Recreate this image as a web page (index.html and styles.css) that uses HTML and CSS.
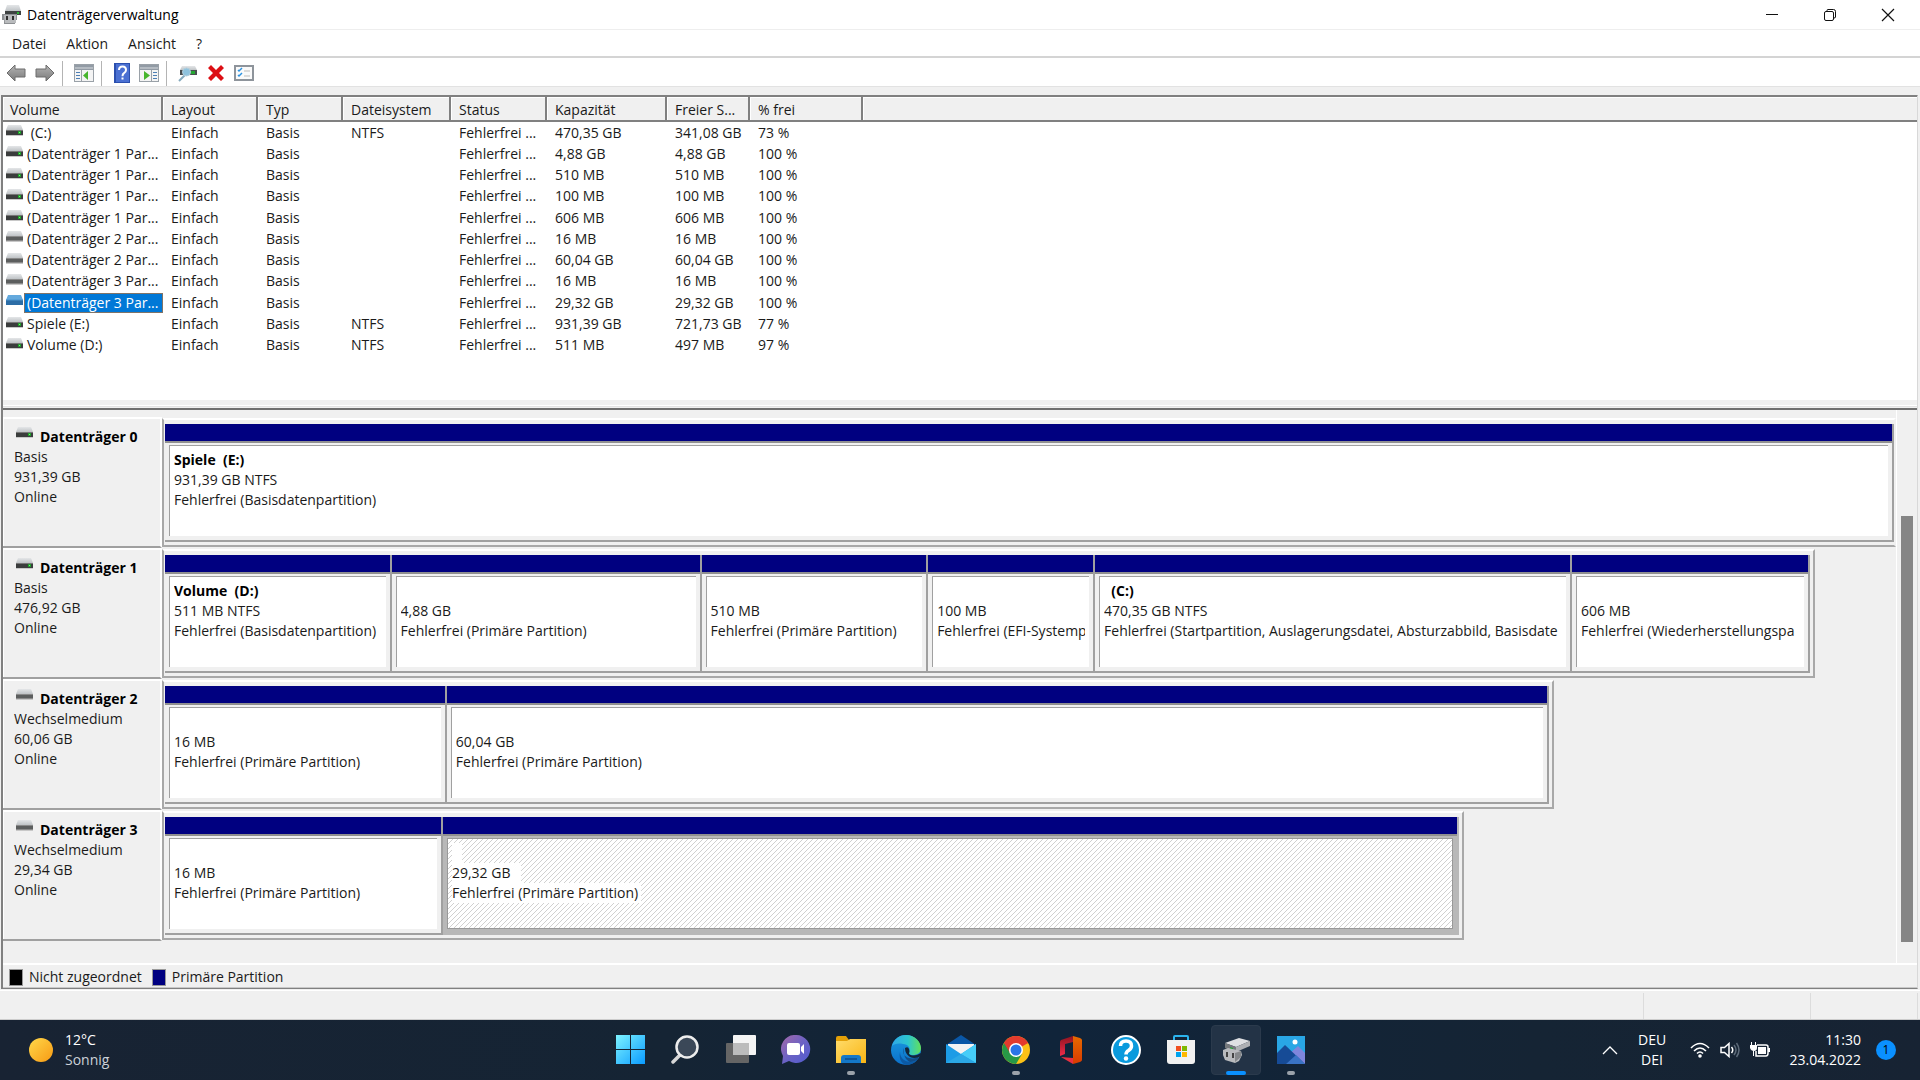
FILE: index.html
```html
<!DOCTYPE html>
<html lang="de">
<head>
<meta charset="utf-8">
<title>Datenträgerverwaltung</title>
<link rel="stylesheet" href="styles.css">
</head>
<body>
<svg class="defs" aria-hidden="true">
  <defs>
    <linearGradient id="metal" x1="0" y1="0" x2="0" y2="1"><stop offset="0" stop-color="#e4e6e8"/><stop offset="1" stop-color="#bfc3c6"/></linearGradient>
    <linearGradient id="arrow" x1="0" y1="0" x2="0" y2="1"><stop offset="0" stop-color="#b4b4b4"/><stop offset="1" stop-color="#7a7a7a"/></linearGradient>
    <linearGradient id="winblue" x1="0" y1="0" x2="1" y2="1"><stop offset="0" stop-color="#7df3ff"/><stop offset="1" stop-color="#0a9bff"/></linearGradient>
    <linearGradient id="chatg" x1="0" y1="0" x2="1" y2="1"><stop offset="0" stop-color="#a568a8"/><stop offset=".5" stop-color="#6b62c4"/><stop offset="1" stop-color="#4f5bd0"/></linearGradient>
    <linearGradient id="folder" x1="0" y1="0" x2="1" y2="1"><stop offset="0" stop-color="#ffdc6b"/><stop offset="1" stop-color="#f9b514"/></linearGradient>
    <linearGradient id="edgeg" x1="0" y1="0" x2="1" y2="0"><stop offset="0" stop-color="#2fa8e8"/><stop offset=".55" stop-color="#2cc6cf"/><stop offset="1" stop-color="#62e05a"/></linearGradient>
    <linearGradient id="edgeb" x1="0" y1="0" x2="0" y2="1"><stop offset="0" stop-color="#1b9be0"/><stop offset="1" stop-color="#0b6fc9"/></linearGradient>
    <linearGradient id="office" x1="0" y1="0" x2="0" y2="1"><stop offset="0" stop-color="#8f1420"/><stop offset="1" stop-color="#ef2b4a"/></linearGradient>
    <linearGradient id="officer" x1="0" y1="0" x2="0" y2="1"><stop offset="0" stop-color="#e66a00"/><stop offset="1" stop-color="#d83b01"/></linearGradient>
    <linearGradient id="sun" x1="0" y1="0" x2="1" y2="1"><stop offset="0" stop-color="#ffd84a"/><stop offset="1" stop-color="#f79a14"/></linearGradient>
    <symbol id="fixed" viewBox="0 0 18 11"><path d="M2 0h13l2 5H0z" fill="url(#metal)"/><rect y="5" width="17" height="5" fill="#3b3d3d"/><rect y="5" width="17" height="1" fill="#777"/><rect x="12" y="6" width="3" height="3" fill="#1f9e2a"/><rect x="13" y="7" width="1" height="1" fill="#6dff6d"/><rect y="10" width="17" height="1" fill="#c8c8c8"/></symbol>
    <symbol id="removable" viewBox="0 0 18 11"><path d="M2 0h13l2 5H0z" fill="url(#metal)"/><rect y="5" width="17" height="5" fill="#5c5e5e"/><rect y="5" width="17" height="1" fill="#8a8a8a"/><rect y="9" width="17" height="1" fill="#8a8a8a"/><rect y="10" width="17" height="1" fill="#c8c8c8"/></symbol>
    <symbol id="marked" viewBox="0 0 18 11"><path d="M2 0h13l2 5H0z" fill="#64a9dd"/><rect y="5" width="17" height="5" fill="#2c6da6"/><path d="M0 5h17" stroke="#4a93cc"/></symbol>
  </defs>
</svg>

<div class="window">
  <header class="titlebar">
    <svg class="app-icon" viewBox="0 0 20 19" width="20" height="19"><path d="M5 0h12l2 6H3z" fill="url(#metal)"/><path d="M3 6h16v4H3z" fill="#3e4242"/><rect x="15" y="7" width="2" height="2" fill="#27b531"/><path d="M0 9h15v6h-2v4H2v-4H0z" fill="#8c8f92"/><path d="M2 10h12v8H3z" fill="#b9bbbd"/><rect x="4" y="11" width="2" height="4" fill="#303030"/><rect x="10" y="11" width="2" height="4" fill="#303030"/></svg>
    <h1 class="title">Datenträgerverwaltung</h1>
    <div class="caption">
      <button class="cap" aria-label="Minimieren"><svg viewBox="0 0 14 14" width="14" height="14"><path d="M1 6.500h12" stroke="#111" fill="none"/></svg></button>
      <button class="cap" aria-label="Verkleinern"><svg viewBox="0 0 14 14" width="14" height="14" fill="none" stroke="#111"><rect x="1.500" y="3.500" width="9" height="9" rx="1.500"/><path d="M4 3V2.500Q4 1.500 5 1.500H10.500Q12.500 1.500 12.500 3.500V9Q12.500 10 11 10"/></svg></button>
      <button class="cap" aria-label="Schließen"><svg viewBox="0 0 14 14" width="14" height="14"><path d="M1 1l12 12M13 1L1 13" stroke="#111" stroke-width="1.200"/></svg></button>
    </div>
  </header>

  <nav class="menubar">
    <button>Datei</button><button>Aktion</button><button>Ansicht</button><button>?</button>
  </nav>

  <div class="toolbar">
    <button aria-label="Zurück"><svg viewBox="0 0 20 18" width="20" height="18"><path d="M1 9L9 1v4h10v8H9v4z" fill="url(#arrow)" stroke="#6c6c6c"/></svg></button>
    <button aria-label="Vorwärts"><svg viewBox="0 0 20 18" width="20" height="18"><path d="M19 9L11 1v4H1v8h10v4z" fill="url(#arrow)" stroke="#6c6c6c"/></svg></button>
    <span class="sep"></span>
    <button class="wide" aria-label="Konsolenstruktur"><svg viewBox="0 0 20 18" width="20" height="18"><rect x=".5" y=".5" width="19" height="17" fill="#f4f4f4" stroke="#9aa1a8"/><path d="M1 1h18v5H1z" fill="#929ba5"/><path d="M1 4h18" stroke="#d8dce0"/><path d="M7.500 6v11" stroke="#9aa1a8"/><path d="M2 8.500h4M2 11.500h4M2 14.500h4" stroke="#4d7fb5"/><path d="M14 7v9l-5-4.500z" fill="#47b52c"/></svg></button>
    <span class="sep"></span>
    <button aria-label="Hilfe"><svg viewBox="0 0 16 20" width="16" height="20"><rect width="16" height="20" fill="#2b4fae"/><rect x="2" y="1" width="13" height="18" fill="#4a70d2"/><path d="M5 7q0-3.500 3.500-3.500T12 7q0 2-2 3.200-1.500 1-1.500 3" fill="none" stroke="#fff" stroke-width="2"/><rect x="7.500" y="14.500" width="2" height="2" fill="#fff"/></svg></button>
    <button aria-label="Aktionsbereich"><svg viewBox="0 0 20 18" width="20" height="18"><rect x=".5" y=".5" width="19" height="17" fill="#f4f4f4" stroke="#9aa1a8"/><path d="M1 1h18v5H1z" fill="#929ba5"/><path d="M1 4h18" stroke="#d8dce0"/><path d="M12.500 6v11" stroke="#9aa1a8"/><path d="M14 8.500h4M14 11.500h4M14 14.500h4" stroke="#4d7fb5"/><path d="M5 7v9l6-4.500z" fill="#47b52c"/></svg></button>
    <span class="sep"></span>
    <button class="wide" aria-label="Datenträger neu einlesen"><svg viewBox="0 0 20 18" width="20" height="18"><path d="M4 2h13l2 4H2z" fill="url(#metal)"/><rect x="2" y="6" width="17" height="5" fill="#4a4e50"/><rect x="13" y="7" width="4" height="3" fill="#25a732"/><path d="M7 11L1 17" stroke="#86aabd" stroke-width="2"/><circle cx="8.500" cy="8" r="4" fill="#8fc3de" stroke="#b5cfdc"/></svg></button>
    <button aria-label="Löschen"><svg viewBox="0 0 18 18" width="18" height="18"><path d="M1 4l3-3 5 5 5-5 3 3-5 5 5 5-3 3-5-5-5 5-3-3 5-5z" fill="#dc0f14"/></svg></button>
    <button aria-label="Eigenschaften"><svg viewBox="0 0 20 16" width="20" height="16"><rect x="1" y="1" width="18" height="14" fill="#fafafa" stroke="#8e949b" stroke-width="2"/><path d="M4 5l1 1 3-3M4 10l1 1 3-3" fill="none" stroke="#2b92e0" stroke-width="1.500"/><path d="M10 6h6M10 11h6" stroke="#bbb"/></svg></button>
  </div>

  <main class="content">
    <section class="volumes">
      <table class="vol">
        <colgroup><col class="c1"><col class="c2"><col class="c3"><col class="c4"><col class="c5"><col class="c6"><col class="c7"><col class="c8"><col></colgroup>
        <thead><tr><th>Volume</th><th>Layout</th><th>Typ</th><th>Dateisystem</th><th>Status</th><th>Kapazität</th><th>Freier S...</th><th>% frei</th><th></th></tr></thead>
        <tbody>
          <tr><td><div class="name"><svg><use href="#fixed"/></svg><span>&nbsp;(C:)</span></div></td><td>Einfach</td><td>Basis</td><td>NTFS</td><td>Fehlerfrei ...</td><td>470,35 GB</td><td>341,08 GB</td><td>73 %</td><td></td></tr>
          <tr><td><div class="name"><svg><use href="#fixed"/></svg><span>(Datenträger 1 Par...</span></div></td><td>Einfach</td><td>Basis</td><td></td><td>Fehlerfrei ...</td><td>4,88 GB</td><td>4,88 GB</td><td>100 %</td><td></td></tr>
          <tr><td><div class="name"><svg><use href="#fixed"/></svg><span>(Datenträger 1 Par...</span></div></td><td>Einfach</td><td>Basis</td><td></td><td>Fehlerfrei ...</td><td>510 MB</td><td>510 MB</td><td>100 %</td><td></td></tr>
          <tr><td><div class="name"><svg><use href="#fixed"/></svg><span>(Datenträger 1 Par...</span></div></td><td>Einfach</td><td>Basis</td><td></td><td>Fehlerfrei ...</td><td>100 MB</td><td>100 MB</td><td>100 %</td><td></td></tr>
          <tr><td><div class="name"><svg><use href="#fixed"/></svg><span>(Datenträger 1 Par...</span></div></td><td>Einfach</td><td>Basis</td><td></td><td>Fehlerfrei ...</td><td>606 MB</td><td>606 MB</td><td>100 %</td><td></td></tr>
          <tr><td><div class="name"><svg><use href="#removable"/></svg><span>(Datenträger 2 Par...</span></div></td><td>Einfach</td><td>Basis</td><td></td><td>Fehlerfrei ...</td><td>16 MB</td><td>16 MB</td><td>100 %</td><td></td></tr>
          <tr><td><div class="name"><svg><use href="#removable"/></svg><span>(Datenträger 2 Par...</span></div></td><td>Einfach</td><td>Basis</td><td></td><td>Fehlerfrei ...</td><td>60,04 GB</td><td>60,04 GB</td><td>100 %</td><td></td></tr>
          <tr><td><div class="name"><svg><use href="#removable"/></svg><span>(Datenträger 3 Par...</span></div></td><td>Einfach</td><td>Basis</td><td></td><td>Fehlerfrei ...</td><td>16 MB</td><td>16 MB</td><td>100 %</td><td></td></tr>
          <tr class="selected"><td><div class="name"><svg><use href="#marked"/></svg><span>(Datenträger 3 Par...</span></div></td><td>Einfach</td><td>Basis</td><td></td><td>Fehlerfrei ...</td><td>29,32 GB</td><td>29,32 GB</td><td>100 %</td><td></td></tr>
          <tr><td><div class="name"><svg><use href="#fixed"/></svg><span>Spiele (E:)</span></div></td><td>Einfach</td><td>Basis</td><td>NTFS</td><td>Fehlerfrei ...</td><td>931,39 GB</td><td>721,73 GB</td><td>77 %</td><td></td></tr>
          <tr><td><div class="name"><svg><use href="#fixed"/></svg><span>Volume (D:)</span></div></td><td>Einfach</td><td>Basis</td><td>NTFS</td><td>Fehlerfrei ...</td><td>511 MB</td><td>497 MB</td><td>97 %</td><td></td></tr>
        </tbody>
      </table>
    </section>
    <div class="splitter"></div>

    <section class="graph">
      <div class="disks">
        <div class="row">
          <div class="label"><h2><svg><use href="#fixed"/></svg>Datenträger 0</h2><p>Basis</p><p>931,39 GB</p><p>Online</p></div>
          <div class="track"><div class="disk full">
            <div class="part"><div class="bar"></div><div class="body"><div class="box"><p><b>Spiele&nbsp; (E:)</b></p><p>931,39 GB NTFS</p><p>Fehlerfrei (Basisdatenpartition)</p></div></div></div>
          </div></div>
        </div>
        <div class="row">
          <div class="label"><h2><svg><use href="#fixed"/></svg>Datenträger 1</h2><p>Basis</p><p>476,92 GB</p><p>Online</p></div>
          <div class="track"><div class="disk" style="width:95.3%">
            <div class="part" style="flex-grow:226"><div class="bar"></div><div class="body"><div class="box"><p><b>Volume&nbsp; (D:)</b></p><p>511 MB NTFS</p><p>Fehlerfrei (Basisdatenpartition)</p></div></div></div>
            <div class="part" style="flex-grow:310"><div class="bar"></div><div class="body"><div class="box"><p></p><p>4,88 GB</p><p>Fehlerfrei (Primäre Partition)</p></div></div></div>
            <div class="part" style="flex-grow:226"><div class="bar"></div><div class="body"><div class="box"><p></p><p>510 MB</p><p>Fehlerfrei (Primäre Partition)</p></div></div></div>
            <div class="part" style="flex-grow:166"><div class="bar"></div><div class="body"><div class="box"><p></p><p>100 MB</p><p>Fehlerfrei (EFI-Systemp</p></div></div></div>
            <div class="part" style="flex-grow:478"><div class="bar"></div><div class="body"><div class="box"><p><b>&nbsp; (C:)</b></p><p>470,35 GB NTFS</p><p>Fehlerfrei (Startpartition, Auslagerungsdatei, Absturzabbild, Basisdate</p></div></div></div>
            <div class="part" style="flex-grow:237"><div class="bar"></div><div class="body"><div class="box"><p></p><p>606 MB</p><p>Fehlerfrei (Wiederherstellungspa</p></div></div></div>
          </div></div>
        </div>
        <div class="row">
          <div class="label"><h2><svg><use href="#removable"/></svg>Datenträger 2</h2><p>Wechselmedium</p><p>60,06 GB</p><p>Online</p></div>
          <div class="track"><div class="disk" style="width:80.3%">
            <div class="part" style="flex-grow:281"><div class="bar"></div><div class="body"><div class="box"><p></p><p>16 MB</p><p>Fehlerfrei (Primäre Partition)</p></div></div></div>
            <div class="part" style="flex-grow:1105"><div class="bar"></div><div class="body"><div class="box"><p></p><p>60,04 GB</p><p>Fehlerfrei (Primäre Partition)</p></div></div></div>
          </div></div>
        </div>
        <div class="row">
          <div class="label"><h2><svg><use href="#removable"/></svg>Datenträger 3</h2><p>Wechselmedium</p><p>29,34 GB</p><p>Online</p></div>
          <div class="track"><div class="disk" style="width:75.1%">
            <div class="part" style="flex-grow:277"><div class="bar"></div><div class="body"><div class="box"><p></p><p>16 MB</p><p>Fehlerfrei (Primäre Partition)</p></div></div></div>
            <div class="part active" style="flex-grow:1018"><div class="bar"></div><div class="body"><div class="box"><p class="blank">&nbsp;&nbsp;</p><p>29,32 GB&nbsp;&nbsp;</p><p>Fehlerfrei (Primäre Partition)</p></div></div></div>
          </div></div>
        </div>
      </div>
      <div class="scroll"><div class="thumb"></div></div>
    </section>
    <div class="legend"><span class="swatch none"></span><span>Nicht zugeordnet</span><span class="swatch primary"></span><span>Primäre Partition</span></div>
  </main>
  <footer class="status"><span></span><span></span><span></span></footer>
</div>

<div class="taskbar">
  <button class="weather"><svg viewBox="0 0 24 24" width="24" height="24"><circle cx="12" cy="12" r="12" fill="url(#sun)"/></svg><span>12°C<br><i>Sonnig</i></span></button>
  <div class="apps">
    <button aria-label="Start"><svg viewBox="0 0 30 30"><path d="M0 0h14v14H0zM15 0h14v14H15zM0 15h14v14H0zM15 15h14v14H15z" fill="url(#winblue)"/></svg></button>
    <button aria-label="Suche"><svg viewBox="0 0 30 30"><path d="M9 20l-7 7" stroke="#d8d8d8" stroke-width="3.500" stroke-linecap="round"/><circle cx="16" cy="12" r="10.500" fill="#3b4858" stroke="#ededed" stroke-width="2.500"/></svg></button>
    <button aria-label="Taskansicht"><svg viewBox="0 0 30 30"><rect y="8" width="23" height="20" rx="1" fill="#656565"/><rect x="7" width="23" height="20" rx="1" fill="#f4f4f4"/><rect x="7" y="8" width="16" height="12" fill="#bcbcbc"/></svg></button>
    <button aria-label="Chat"><svg viewBox="0 0 30 30"><path d="M15 0a14 14 0 1 1-7 26L1 29l1-8A14 14 0 0 1 15 0z" fill="url(#chatg)"/><rect x="6" y="8" width="13" height="12" rx="2" fill="#fff"/><path d="M20 12l3-3v10l-3-3z" fill="#fff"/></svg></button>
    <button class="running" aria-label="Explorer"><svg viewBox="0 0 30 30"><path d="M0 3q0-2 2-2h8l3 4v5H0z" fill="#e3a008"/><path d="M0 6h11l3-2h16v24H0z" fill="url(#folder)"/><path d="M5 28v-5q0-3 3-3h14q3 0 3 3v5z" fill="#1478c8"/><path d="M9 24h12" stroke="#0b4d8c" stroke-width="1.500"/></svg></button>
    <button aria-label="Edge"><svg viewBox="0 0 30 30"><circle cx="15" cy="15" r="15" fill="url(#edgeb)"/><path d="M1 11C3 4 8 0 15 0c9 0 15 7 15 13 0 5-4 7-8 7-3 0-5-1-4-3 2-4-1-8-6-8-5-1-9 0-11 2z" fill="url(#edgeg)"/><path d="M9 17c0 7 6 10 11 10 3 0 5-1 7-3-3 4-7 6-12 6C9 28 8 22 9 17z" fill="#0c59a4"/><path d="M13 13c-2 4 0 9 5 10 4 1 8 0 10-2l-1 3q-3 3-8 3C14 25 12 19 13 13z" fill="#124c86"/><path d="M14 13q3-2 4 1t0 4q0 2 4 2.500 4 0 8-2.500l1 2-3 2q-5 2-9 0-5-3-5-9z" fill="#13263a"/></svg></button>
    <button aria-label="Mail"><svg viewBox="0 0 30 30"><path d="M0 10L15 0l15 10v6H0z" fill="#0a57a6"/><path d="M2 9h26v10H2z" fill="#f3f3f3"/><path d="M0 9l15 10L30 9v19H0z" fill="#1c9ce6"/><path d="M30 9L15 19l15 9z" fill="#46cdf8"/><path d="M0 28l15-9 15 9z" fill="#2ba8e6"/></svg></button>
    <button class="running" aria-label="Chrome"><svg viewBox="0 0 30 30"><circle cx="15" cy="15" r="14" fill="#fbc116"/><path d="M15 15L2.900 8A14 14 0 0 1 27.100 8z" fill="#e33b2e"/><path d="M15 15L2.900 8A14 14 0 0 0 15 29l6-10z" fill="#279847"/><path d="M15 8h12.100A14 14 0 0 0 3 8l6 10z" fill="#e33b2e"/><circle cx="15" cy="15" r="7" fill="#fff"/><circle cx="15" cy="15" r="5.500" fill="#2a75e8"/></svg></button>
    <button aria-label="Office"><svg viewBox="0 0 30 30"><path d="M17 1L5 5q-1 1-1 2v14l5-2V9l8-2z" fill="url(#office)"/><path d="M17 1l7 2q2 1 2 2v20q0 1-2 2l-7 2z" fill="url(#officer)"/><path d="M5 22l12 1v6z" fill="#e83040"/></svg></button>
    <button aria-label="Hilfe"><svg viewBox="0 0 30 30"><circle cx="15" cy="15" r="14" fill="#0a9add" stroke="#fff" stroke-width="2"/><path d="M9.500 11q0-5 5.500-5t5.500 5q0 2.500-3 4.500-2.500 1.500-2.500 4" fill="none" stroke="#fff" stroke-width="3.500"/><circle cx="15" cy="23.500" r="2.200" fill="#fff"/></svg></button>
    <button aria-label="Store"><svg viewBox="0 0 30 30"><path d="M8 6V2q0-1 1-1h12q1 0 1 1v4" fill="none" stroke="#2bb4ee" stroke-width="2"/><path d="M1 5h28v21q0 3-3 3H4q-3 0-3-3z" fill="#f1f1f1"/><path d="M10 11h5v5h-5z" fill="#f04e1f"/><path d="M16 11h5v5h-5z" fill="#7fb900"/><path d="M10 17h5v5h-5z" fill="#00a3ee"/><path d="M16 17h5v5h-5z" fill="#feb800"/></svg></button>
    <button class="running current" aria-label="Datenträgerverwaltung"><svg viewBox="0 0 30 30"><path d="M4 8l14-5 11 3-14 6z" fill="#dfe0e3"/><path d="M4 8l11 4v5L4 13z" fill="#75797d"/><path d="M15 12l14-6v5l-14 6z" fill="#aeb0b4"/><path d="M9 12l3 1v2l-3-1z" fill="#29a035"/><path d="M2 15l5-2 13 3 1 4-3 6-4 2-10-3-2-5z" fill="#b9bbbe"/><path d="M14 18l6-2v6l-6 5z" fill="#85888b"/><rect x="5" y="17" width="2" height="5" fill="#444"/><rect x="11" y="18" width="2" height="5" fill="#444"/></svg></button>
    <button class="running" aria-label="Fotos"><svg viewBox="0 0 30 30"><path d="M1 1h28v28H1z" fill="#29a6e5"/><path d="M13 19l9-8 7 7v11H13z" fill="#7f86dc"/><path d="M1 18l8-8 20 19H1z" fill="#164b96"/><path d="M10 29l10-9 9 9z" fill="#3a73c4"/><circle cx="19" cy="7" r="2.500" fill="#fff"/></svg></button>
  </div>
  <div class="tray">
    <button aria-label="Ausgeblendete Symbole"><svg viewBox="0 0 16 9" width="16" height="9"><path d="M1 8l7-7 7 7" fill="none" stroke="#fff" stroke-width="1.300"/></svg></button>
    <button class="lang">DEU<br>DEI</button>
    <button class="net" aria-label="Netzwerk, Lautstärke, Akku">
      <svg viewBox="0 0 20 16" width="20" height="16" fill="none" stroke="#fff" stroke-width="1.600"><path d="M1 6q9-9 18 0M4 9q6-6 12 0M7 11.500q3-3 6 0"/><circle cx="10" cy="14" r="1" fill="#fff"/></svg>
      <svg viewBox="0 0 20 16" width="20" height="16" fill="none" stroke="#fff" stroke-width="1.500"><path d="M1 5.500h3.500L9 1.500v13l-4.500-4H1z"/><path d="M11.500 5q2.500 3 0 6"/><path d="M14 3q4 5 0 10M16.500 1q5 7 0 14" stroke="#5c6a79"/></svg>
      <svg viewBox="0 0 20 16" width="20" height="16"><path d="M7 3h9q2 0 2 2v6q0 3-2 3H6V9" fill="none" stroke="#fff" stroke-width="1.500"/><path d="M8 5h8v7H8z" fill="#fff"/><path d="M18 6h2v4h-2zM0 3h7v3q0 3-3 3t-4-3zM1 0h1v4H1zM5 0h1v4H5zM3 8h1v6H3z" fill="#fff"/></svg>
    </button>
    <button class="clock">11:30<br>23.04.2022</button>
    <button class="badge">1</button>
  </div>
</div>
</body>
</html>
```
FILE: styles.css
```css
* { box-sizing: border-box; }
html, body { height: 100%; margin: 0; }
body {
  display: flex;
  flex-direction: column;
  font: 14px/20px "Open Sans", "Noto Sans", sans-serif;
  color: #1a1a1a;
  background: #f0f0f0;
  overflow: hidden;
}
h1, h2, p { margin: 0; font-size: inherit; font-weight: normal; }
button { border: 0; padding: 0; background: none; font: inherit; color: inherit; }
svg { display: block; flex: none; }
.defs { position: absolute; width: 0; height: 0; }
.window { flex: 1; display: flex; flex-direction: column; min-height: 0; }

/* Title, menu and tool bars */
.titlebar { display: flex; align-items: center; height: 29px; padding-left: 2px; background: #fff; }
.title { margin-left: 5px; color: #000; }
.caption { display: flex; margin-left: auto; padding-right: 3px; }
.cap { display: flex; justify-content: center; align-items: center; width: 58px; height: 29px; }
.menubar { display: flex; gap: 20px; height: 29px; padding: 2px 12px 0; background: #fff; border-top: 1px solid #eee; border-bottom: 2px solid #d4d4d4; }
.toolbar { display: flex; align-items: center; gap: 9px; height: 29px; padding: 2px 6px 0; background: #fff; border-bottom: 1px solid #e2e2e2; }
.toolbar .sep { width: 1px; height: 25px; margin-left: -2px; background: #b4b4b4; }
.toolbar .sep + button { margin-left: 3px; }
.toolbar .sep + .wide { margin-left: 2px; }

/* Volume list */
.content { flex: 1; display: flex; flex-direction: column; min-height: 0; margin: 8px 2px 0 1px; border: solid #808080; border-width: 1px 1px 1px 2px; border-right-color: #d8d8d8; }
.volumes { background: #fff; padding-bottom: 44px; }
.vol { width: 100%; height: 260px; table-layout: fixed; border-collapse: separate; border-spacing: 0; white-space: nowrap; }
.c1 { width: 160px; } .c2 { width: 95px; } .c3 { width: 85px; } .c4 { width: 108px; }
.c5 { width: 96px; } .c6 { width: 120px; } .c7 { width: 83px; } .c8 { width: 113px; }
.vol th { height: 26px; padding: 3px 0 0 8px; text-align: left; font-weight: normal; line-height: 20px; background: #f0f0f0; border: solid #808080; border-width: 1px 2px 2px 0; box-shadow: inset 1px 1px #fff; }
.vol th:first-child { padding-left: 7px; }
.vol th:last-child { border-right: 0; }
.vol td { padding: 0 0 0 8px; line-height: 20px; overflow: hidden; }
.vol td:first-child { padding-left: 3px; }
.name { display: flex; align-items: center; }
.name svg { width: 18px; height: 11px; margin-bottom: 4px; }
.name span { flex: 1; padding-left: 2px; border: 1px solid transparent; line-height: 18px; }
.selected .name span { background: #0078d7; border-color: #807468; color: #fff; }
.splitter { flex: none; height: 10px; background: #f0f0f0; border-bottom: 2px solid #707070; box-shadow: inset 0 5px #f0f0f0, inset 0 6px #fff, inset 0 7px #e4e4e4; }

/* Graphical disk view */
.graph { flex: 1; display: flex; min-height: 0; }
.disks { flex: 1; min-width: 0; padding-top: 7px; }
.row { display: flex; }
.label { flex: none; width: 159px; padding: 8px 0 0 11px; border-top: 2px solid #fff; border-bottom: 2px solid #a0a0a0; border-right: 2px solid #fff; box-shadow: inset 1px 0 #fff; }
.label h2 { display: flex; gap: 6px; padding-left: 2px; font-weight: bold; color: #000; }
.label h2 svg { width: 18px; height: 11px; }
.track { flex: 1; min-width: 0; padding: 1px 0; }
.disk { display: flex; padding: 4px 3px 3px 1px; border: 2px solid #a8a8a8; border-top-color: #fff; }
.disk.full { padding-right: 0; border-right-color: #f0f0f0; }
.part { flex: 1 1 0; min-width: 0; border: solid #a0a0a0; border-width: 0 2px 2px 0; }
.bar { height: 19px; background: #000080; border-bottom: 2px solid #909090; }
.body { padding: 2px 4px 4px 4px; }
.box { height: 91px; padding: 4px; background: #fff; border: solid #a0a0a0; border-width: 1px 0 0 1px; overflow: hidden; white-space: nowrap; }
.box p { height: 20px; overflow: hidden; }
.box b { color: #000; }
.active { border-color: #b8b8b8; }
.active .body { background: #b8b8b8; }
.active .box { border: 1px solid #999; background: linear-gradient(135deg, #fff 40%, #d0d0d0 42%, #d0d0d0 58%, #fff 60%) 0 0 / 5px 5px; }
.active .box p { width: fit-content; padding-right: 3px; background: #fff; }
.scroll { flex: none; width: 21px; padding: 106px 4px 21px; border-left: 1px solid #fff; }
.thumb { height: 100%; background: #858585; }
.legend { display: flex; align-items: center; gap: 6px; height: 25px; padding: 2px 0 0 6px; border-top: 2px solid #fff; border-bottom: 1px solid #c8c8c8; }
.swatch { width: 14px; height: 17px; border: 1px solid #999; }
.none { background: #000; }
.primary { margin-left: 4px; background: #000080; }
.status { display: flex; height: 30px; margin-top: 1px; border-top: 1px solid #fff; padding: 2px 2px 0 0; border-bottom: 1px solid #ccc; }
.status span { width: 167px; border-right: 1px solid #dcdcdc; }
.status span:first-child { flex: 1; }
.status span:last-child { width: 107px; }

/* Taskbar */
.taskbar { flex: none; display: grid; grid-template-columns: 1fr auto 1fr; align-items: center; height: 60px; color: #fff; background: linear-gradient(90deg, #182333, #152434 35%, #10243a 55%, #152434 80%, #172333); }
.weather { display: flex; align-items: center; gap: 12px; padding-left: 29px; text-align: left; justify-self: start; }
.weather i { font-style: normal; color: #ccd2d8; }
.apps { display: flex; gap: 5px; padding-left: 2px; }
.apps button { display: flex; flex-direction: column; align-items: center; justify-content: center; width: 50px; height: 50px; border-radius: 4px; }
.apps svg { width: 30px; height: 30px; }
.running::after { content: ""; width: 8px; height: 4px; margin: 6px 0 -10px; border-radius: 2px; background: #9ba2aa; }
.current { background: #233346; border: 1px solid #2b3a4c; }
.current::after { width: 20px; background: #0a90ff; }
.tray { display: flex; align-items: center; justify-self: end; padding-right: 24px; }
.lang { margin-left: 20px; width: 28px; text-align: center; }
.net { display: flex; gap: 10px; margin-left: 24px; }
.clock { margin-left: 18px; text-align: right; width: 73px; }
.badge { width: 20px; height: 20px; margin-left: 15px; border-radius: 50%; background: #0a90ff; color: #000; font-size: 12px; }
```
